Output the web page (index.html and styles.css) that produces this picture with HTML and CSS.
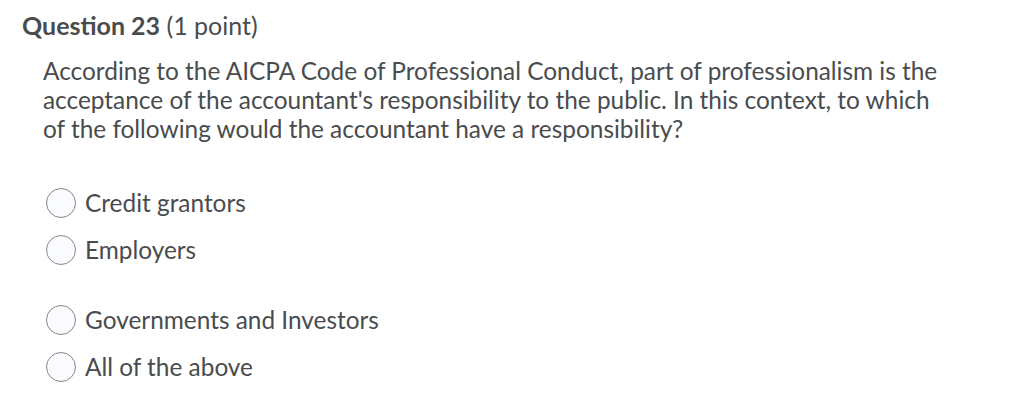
FILE: index.html
```html
<!DOCTYPE html>
<html>
<head>
<meta charset="utf-8">
<link rel="stylesheet" href="styles.css">
</head>
<body>
<div class="question">
  <h2 class="q-title"><strong>Question 23</strong> <span class="pts">(1 point)</span></h2>
  <div class="q-body">
    <p class="q-text">According to the AICPA Code of Professional Conduct, part of professionalism is the acceptance of the accountant's responsibility to the public. In this context, to which of the following would the accountant have a responsibility?</p>
    <div class="options">
      <label class="opt"><span class="radio"></span><span class="opt-text">Credit grantors</span></label>
      <label class="opt"><span class="radio"></span><span class="opt-text">Employers</span></label>
      <label class="opt gap"><span class="radio"></span><span class="opt-text">Governments and Investors</span></label>
      <label class="opt"><span class="radio"></span><span class="opt-text">All of the above</span></label>
    </div>
  </div>
</div>
</body>
</html>
```
FILE: styles.css
```css
html, body { margin: 0; padding: 0; background: #fff; }
body { font-family: Lato, "Noto Sans", sans-serif; color: #494c4e; }
.question { padding: 10px 0 0 22px; }
.q-title { margin: 0; font-size: 25px; font-weight: 400; line-height: 30px; color: #494c4e; }
.q-title strong { font-weight: 700; }
.q-body { padding-left: 21px; }
.q-text { margin: 16px 0 0; font-size: 24.4px; line-height: 29px; width: 900px; }
.options { margin-top: 36px; display: flex; flex-direction: column; }
.opt { display: flex; align-items: center; height: 47px; gap: 9px; font-size: 24.4px; }
.opt.gap { margin-top: 23px; }
.radio { box-sizing: border-box; width: 30px; height: 30px; border-radius: 50%; border: 1px solid #868686; background: #f9fbff; margin-left: 3px; flex: none; }
```
